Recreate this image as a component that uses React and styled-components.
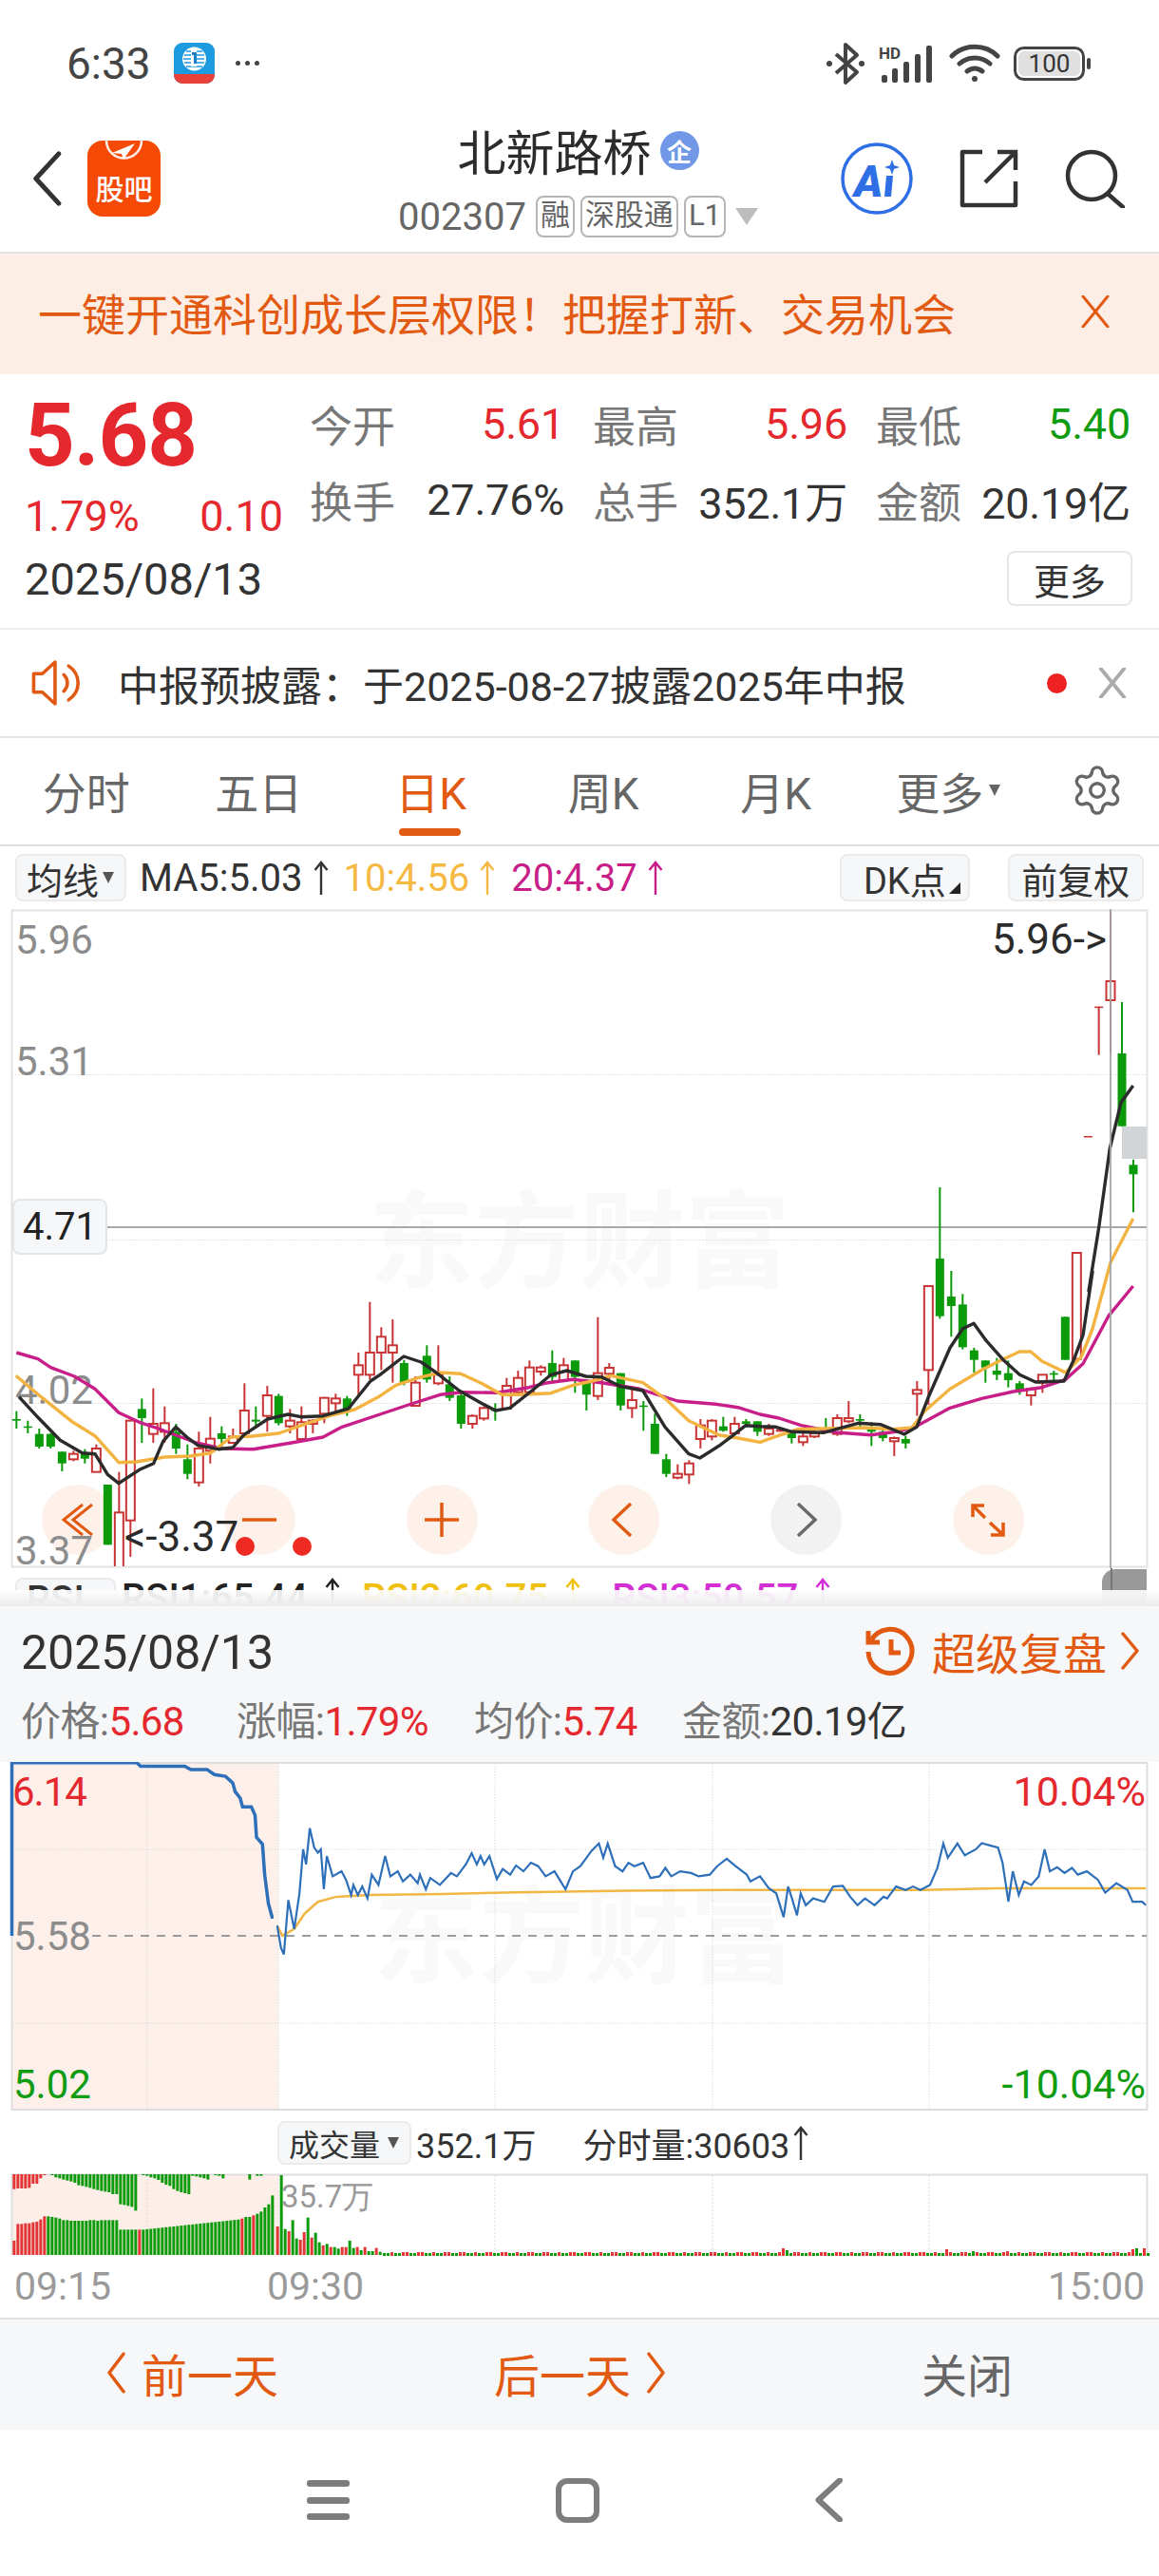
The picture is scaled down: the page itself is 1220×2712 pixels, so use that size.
import React from 'react';
import styled, { createGlobalStyle } from 'styled-components';
import { Settings } from 'lucide-react';

const RED = '#e4282d';
const GREEN = '#109c10';
const ORANGE = '#e25a12';
const CANDLE_RED = '#c93434';
const CANDLE_GREEN = '#0a9a0a';

// candles read off the chart: [x, wickTop, bodyTop, bodyBottom, wickBottom, colour]
const LEFT_CANDLES = [
  [52, 440, 465, 470, 495, 'g'], [88, 470, 488, 492, 510, 'g'], [124, 495, 512, 552, 558, 'g'],
  [160, 510, 512, 552, 558, 'g'], [196, 568, 568, 605, 630, 'g'], [232, 565, 575, 592, 598, 'r'],
  [268, 560, 575, 590, 605, 'g'], [304, 545, 558, 632, 632, 'r'], [340, 672, 672, 862, 862, 'g'],
  [376, 632, 760, 940, 940, 'r'], [412, 470, 470, 785, 900, 'r'], [448, 400, 433, 462, 540, 'g'],
  [484, 368, 480, 512, 540, 'r'], [520, 425, 478, 505, 540, 'r'], [556, 480, 505, 558, 575, 'g'],
  [592, 545, 592, 638, 655, 'g'], [628, 505, 558, 665, 678, 'r'], [664, 458, 527, 565, 605, 'r'],
  [700, 488, 510, 528, 555, 'g'], [736, 495, 520, 540, 540, 'r'], [772, 352, 438, 510, 510, 'r'],
  [808, 425, 467, 473, 490, 'g'], [844, 360, 390, 455, 505, 'r'], [880, 385, 392, 478, 485, 'g'],
  [916, 433, 470, 488, 510, 'r'], [952, 425, 475, 528, 528, 'r'], [988, 465, 470, 480, 510, 'r'],
  [1024, 395, 398, 448, 478, 'r'], [1060, 385, 400, 415, 445, 'r'], [1096, 392, 400, 440, 455, 'g'],
  [1132, 255, 295, 325, 395, 'r'], [1168, 95, 255, 325, 340, 'r'], [1204, 175, 205, 255, 310, 'r'],
];
const MID_CANDLES = [
  [40, 150, 232, 255, 350, 'r'], [76, 278, 288, 350, 358, 'g'], [112, 330, 350, 423, 425, 'r'],
  [148, 232, 265, 340, 350, 'g'], [184, 232, 325, 352, 358, 'r'], [220, 330, 355, 398, 408, 'g'],
  [256, 385, 390, 480, 495, 'g'], [292, 450, 455, 480, 495, 'r'], [328, 425, 430, 463, 470, 'r'],
  [364, 415, 435, 437, 470, 'g'], [400, 335, 360, 432, 432, 'r'], [436, 312, 335, 380, 385, 'r'],
  [472, 280, 302, 380, 385, 'r'], [508, 295, 302, 315, 328, 'r'], [544, 248, 288, 332, 345, 'g'],
  [580, 272, 295, 342, 345, 'r'], [616, 280, 280, 332, 382, 'g'], [652, 340, 350, 388, 438, 'g'],
  [688, 143, 320, 392, 405, 'r'], [724, 288, 303, 322, 350, 'r'], [760, 320, 320, 422, 438, 'g'],
  [796, 372, 405, 430, 462, 'r'], [832, 408, 422, 426, 502, 'g'], [868, 448, 480, 575, 575, 'g'],
  [904, 575, 592, 638, 648, 'g'], [940, 608, 638, 650, 655, 'r'], [976, 595, 605, 640, 670, 'r'],
  [1012, 465, 485, 528, 558, 'r'], [1048, 465, 470, 520, 532, 'r'], [1084, 458, 488, 502, 505, 'g'],
  [1120, 458, 480, 510, 515, 'r'], [1156, 465, 472, 480, 490, 'g'], [1192, 472, 472, 505, 518, 'g'],
];
const RIGHT_CANDLES = [
  [28, 480, 495, 512, 518, 'r'], [64, 490, 497, 505, 505, 'r'], [100, 500, 510, 525, 542, 'g'],
  [136, 510, 520, 538, 550, 'r'], [172, 500, 510, 520, 525, 'r'], [208, 462, 500, 505, 510, 'g'],
  [244, 450, 462, 512, 518, 'r'], [280, 408, 462, 472, 478, 'r'], [316, 450, 465, 470, 490, 'g'],
  [352, 475, 495, 505, 550, 'g'], [388, 500, 505, 525, 535, 'g'], [424, 520, 525, 535, 582, 'r'],
  [460, 518, 528, 542, 558, 'g'], [496, 345, 373, 385, 455, 'r'], [532, 45, 45, 310, 420, 'r'],
  [568, -267, -42, 140, 148, 'g'], [604, -3, 78, 108, 205, 'g'], [640, 70, 103, 238, 245, 'g'],
  [676, 240, 248, 278, 318, 'g'], [712, 280, 280, 302, 350, 'g'], [748, 272, 312, 325, 342, 'g'],
  [784, 280, 320, 342, 365, 'g'], [820, 345, 352, 375, 388, 'g'], [856, 365, 370, 390, 422, 'r'],
  [892, 325, 325, 350, 382, 'r'], [928, 312, 320, 325, 345, 'g'], [964, 142, 142, 278, 278, 'g'],
  [1000, -60, -60, 275, 275, 'r'],
];
const TOP_CANDLES = [
  [316, 711, 711, 714, 714, 'r'], [350, 302, 302, 304, 455, 'r'], [387, 0, 222, 282, 448, 'r'],
  [423, 288, 450, 680, 680, 'g'], [459, 785, 802, 832, 952, 'g'],
];
const place = (list, ox, oy) =>
  list.map(([x, a, b, c, d, k]) => [ox + x / 3, oy + a / 3, oy + b / 3, oy + c / 3, oy + d / 3, k]);
const CANDLES = [
  ...place(LEFT_CANDLES, 0, 1340),
  ...place(MID_CANDLES, 400, 1340),
  ...place(RIGHT_CANDLES, 800, 1340),
  ...place(TOP_CANDLES, 1040, 960),
];

const toPts = (list, ox, oy, sx = 3, sy = 3) =>
  list.map(([x, y]) => `${(ox + x / sx).toFixed(1)},${(oy + y / sy).toFixed(1)}`).join(' ');

const MA5 = [
  toPts([[60, 395], [120, 460], [190, 532], [260, 572], [300, 575], [340, 640], [375, 668], [440, 625], [485, 605], [515, 535], [555, 490], [590, 522], [625, 548], [690, 560], [735, 555], [770, 515], [845, 465], [910, 450], [950, 458], [1020, 455], [1100, 432], [1170, 345]], 0, 1340),
  toPts([[0, 325], [75, 267], [130, 285], [180, 320], [250, 375], [320, 415], [365, 438], [410, 430], [480, 375], [540, 325], [590, 312], [650, 330], [700, 332], [760, 362], [830, 375], [900, 490], [975, 575], [1010, 588], [1070, 550], [1110, 520], [1155, 485]], 400, 1340),
  toPts([[0, 488], [50, 490], [100, 505], [200, 508], [310, 478], [380, 482], [420, 498], [455, 513], [495, 490], [530, 400], [600, 240], [640, 180], [675, 163], [715, 218], [770, 280], [820, 325], [870, 348], [960, 345], [990, 280], [1020, 200], [1050, 0]], 800, 1340),
  toPts([[318, 1200], [350, 1000], [385, 750], [420, 605], [458, 552]], 1040, 960),
].join(' ');
const MA10 = [
  toPts([[50, 328], [130, 395], [230, 475], [300, 518], [375, 602], [430, 600], [520, 585], [600, 582], [665, 572], [730, 522], [790, 520], [880, 510], [960, 482], [1040, 455], [1120, 435]], 0, 1340),
  toPts([[0, 392], [50, 358], [120, 335], [190, 318], [255, 322], [320, 352], [385, 388], [440, 388], [540, 383], [610, 358], [670, 345], [730, 328], [830, 350], [900, 400], [975, 470], [1070, 515], [1130, 525]], 400, 1340),
  toPts([[0, 538], [50, 520], [120, 497], [200, 495], [330, 492], [420, 497], [480, 492], [520, 440], [600, 370], [700, 310], [760, 280], [820, 252], [855, 252], [890, 282], [965, 318], [1015, 268], [1050, 180]], 800, 1340),
  toPts([[387, 1110], [458, 972]], 1040, 960),
].join(' ');
const MA20 = [
  toPts([[52, 255], [120, 275], [160, 302], [235, 330], [300, 370], [375, 445], [440, 475], [500, 495], [620, 540], [700, 558], [800, 560], [920, 540], [1020, 522], [1080, 490]], 0, 1340),
  toPts([[0, 450], [90, 420], [190, 388], [260, 380], [370, 382], [470, 365], [530, 350], [610, 340], [700, 350], [820, 370], [940, 408], [1060, 418], [1130, 428]], 400, 1340),
  toPts([[0, 450], [60, 462], [130, 485], [240, 507], [350, 515], [440, 503], [490, 490], [600, 430], [700, 400], [800, 378], [890, 365], [965, 340], [1020, 290], [1100, 140], [1178, 45]], 800, 1340),
].join(' ');

const PRE_LINE = toPts([[16, 1005], [16, 495], [185, 495], [190, 505], [250, 505], [258, 515], [280, 515], [290, 530], [305, 535], [315, 555], [318, 580], [325, 600], [328, 625], [340, 625], [345, 650], [347, 715], [355, 735], [358, 825], [363, 910], [368, 950], [370, 950]], 0, 1680, 1.285, 2.8);
const DAY_LINE = toPts([[375, 975], [380, 1040], [384, 1060], [390, 900], [398, 985], [405, 880], [410, 750], [414, 795], [419, 688], [425, 745], [430, 760], [434, 750], [438, 868], [442, 770], [450, 830], [462, 815], [468, 840], [475, 885], [478, 855], [484, 885], [490, 860], [497, 895], [503, 825], [512, 855], [521, 770], [528, 830], [538, 815], [545, 845], [555, 825], [565, 850], [568, 825], [576, 868], [582, 835], [595, 855], [610, 820], [618, 830], [630, 795], [638, 762], [645, 795], [650, 770], [655, 795], [662, 770], [672, 838], [680, 808], [690, 825], [698, 798], [708, 815], [718, 790], [728, 800], [738, 830], [750, 815], [765, 868], [775, 815], [785, 800], [800, 755], [810, 733], [816, 775], [822, 733], [832, 800], [842, 815], [850, 790], [858, 800], [870, 790], [880, 835], [892, 830], [900, 805], [908, 830], [920, 815], [935, 820], [945, 830], [960, 825], [970, 800], [983, 778], [995, 800], [1010, 825], [1015, 845], [1028, 830], [1040, 865], [1050, 880], [1060, 950], [1066, 860], [1072, 900], [1078, 945], [1083, 880], [1090, 915], [1100, 895], [1115, 905], [1127, 860], [1140, 858], [1150, 890], [1160, 915], [1170, 895], [1183, 915], [1195, 890], [1200, 895], [1212, 860], [1225, 870], [1235, 860], [1245, 870], [1258, 855], [1268, 805], [1276, 733], [1282, 775], [1295, 733], [1305, 768], [1320, 750], [1328, 732], [1338, 738], [1350, 745], [1356, 790], [1364, 905], [1370, 815], [1378, 885], [1385, 845], [1395, 855], [1405, 830], [1413, 750], [1420, 815], [1430, 803], [1440, 820], [1450, 805], [1458, 825], [1470, 815], [1485, 840], [1495, 878], [1510, 850], [1525, 870], [1532, 905], [1545, 905], [1550, 915]], 0, 1680, 1.285, 2.8);
const AVG_LINE = toPts([[375, 975], [382, 1005], [398, 985], [412, 940], [430, 905], [455, 890], [500, 885], [600, 882], [700, 877], [850, 872], [1000, 870], [1250, 870], [1350, 865], [1550, 865]], 0, 1680, 1.285, 2.8);

// volume bars: y values in the 3x crop, one bar per 12 units
const buildVolume = () => {
  const bars = [];
  const bar = (X, top, bottom, k) => bars.push([X / 3, 2285 + top / 3, (bottom - top) / 3, k]);
  [225, 172, 172, 170, 170, 167, 165, 158, 148].forEach((y, i) => bar(40 + i * 12, y, 270, 'r'));
  [148, 150, 152, 155, 160, 160, 162, 162, 162, 162, 162, 160, 160, 162, 160, 160, 160, 160, 160].forEach((y, i) => bar(148 + i * 12, y, 270, 'g'));
  [190, 190, 190, 190, 190].forEach((y, i) => bar(376 + i * 12, y, 270, 'g'));
  bar(436, 190, 270, 'r');
  for (let X = 448; X < 760; X += 12) bar(X, 190 - ((X - 448) / 312) * 33, 270, 'g');
  [[760, 155, 'r'], [772, 150, 'g'], [784, 150, 'g'], [796, 145, 'r'], [808, 140, 'g'], [820, 133, 'g'], [832, 120, 'g'], [844, 110, 'g'], [856, 82, 'g']].forEach(([X, y, k]) => bar(X, y, 270, k));
  [62, 60, 60, 60, 58, 45, 45, 28, 18].forEach((y, i) => bar(40 + i * 12, 15, y, 'r'));
  [18, 25, 28, 32, 35, 38, 42, 50, 52, 55, 58, 62, 65, 68, 70, 72, 78, 78, 110, 112, 115, 118, 130].forEach((y, i) => bar(160 + i * 12, 15, y, 'g'));
  [18, 20, 25, 28, 33, 42, 48, 52, 62, 68, 72, 75, 78, 20, 22, 25, 28, 32].forEach((y, i) => bar(448 + i * 12, 15, y, 'g'));
  [[676, 18], [688, 20], [700, 28], [784, 32], [808, 20], [820, 20]].forEach(([X, y]) => bar(X, 15, y, 'g'));
  [[872, 180, 'r'], [884, 18, 'g'], [896, 188, 'g'], [908, 195, 'r'], [920, 160, 'g'], [932, 218, 'g'], [944, 222, 'r'], [956, 198, 'r'], [968, 152, 'g'], [980, 215, 'r'], [992, 200, 'g'], [1004, 230, 'g'], [1016, 240, 'r'], [1028, 235, 'g'], [1040, 245, 'r'], [1052, 245, 'g'], [1064, 250, 'g'], [1076, 245, 'r'], [1088, 245, 'r'], [1100, 225, 'g'], [1112, 248, 'g'], [1124, 245, 'r'], [1136, 255, 'g'], [1148, 245, 'r'], [1160, 258, 'g'], [1172, 258, 'g'], [1184, 248, 'r'], [1196, 260, 'g']].forEach(([X, y, k]) => bar(X, y, 270, k));
  const spikes = { 823: 8, 827: 6, 995: 7, 1023: 5, 1059: 5, 1191: 7, 1195: 8, 1203: 8 };
  for (let x = 403; x < 1208; x += 4) {
    const seed = (x * 37) % 11;
    const h = spikes[x] || 3 + (seed % 2);
    bars.push([x, 2376 - h, h, seed % 2 ? 'r' : 'g']);
  }
  return bars;
};
const VOLUME = buildVolume();

const GlobalStyle = createGlobalStyle`
  html, body { margin: 0; padding: 0; background: #fff; }
  * { box-sizing: border-box; }
  body { font-family: Roboto, "Noto Sans CJK SC", sans-serif; color: #333; }
`;

const Page = styled.div`
  width: 1220px;
  height: 2712px;
  overflow: hidden;
  background: #fff;
  display: flex;
  flex-direction: column;
`;

const StatusBar = styled.div`
  height: 105px;
  padding: 28px 71px 0 70px;
  display: flex;
  align-items: center;
  gap: 22px;
`;
const Clock = styled.span`
  font-size: 46px;
  color: #444;
  width: 91px;
`;
const Dots = styled.span`
  display: flex;
  gap: 5px;
  & > i {
    width: 5px;
    height: 5px;
    border-radius: 50%;
    background: #444;
  }
`;
const StatusIcons = styled.div`
  margin-left: auto;
  display: flex;
  align-items: center;
  gap: 14px;
`;

const Header = styled.header`
  height: 162px;
  padding: 6px 36px 0 33px;
  display: grid;
  grid-template-columns: 1fr auto 1fr;
  align-items: center;
  border-bottom: 2px solid #e2e2e2;
`;
const HeaderLeft = styled.div`
  display: flex;
  align-items: center;
  gap: 27px;
`;
const HeaderRight = styled.div`
  display: flex;
  align-items: center;
  justify-content: flex-end;
  gap: 49px;
`;
const TitleBlock = styled.div`
  display: flex;
  flex-direction: column;
  align-items: center;
  gap: 16px;
  margin-top: 2px;
`;
const TitleRow = styled.div`
  display: flex;
  align-items: center;
  gap: 9px;
  height: 62px;
`;
const Title = styled.h1`
  margin: 0;
  font-size: 51px;
  font-weight: 400;
  color: #2b2b2b;
`;
const QualBadge = styled.span`
  width: 41px;
  height: 41px;
  border-radius: 50%;
  background: #7098e6;
  color: #fff;
  font-size: 26px;
  font-weight: 700;
  display: flex;
  align-items: center;
  justify-content: center;
`;
const SubRow = styled.div`
  display: flex;
  align-items: center;
  gap: 6px;
  height: 46px;
  color: #666;
`;
const Code = styled.span`
  font-size: 40px;
  margin-right: 4px;
`;
const Tag = styled.span`
  height: 44px;
  padding: 0 3px;
  border: 2px solid #b5b5b5;
  border-radius: 8px;
  font-size: 31px;
  line-height: 38px;
  color: #666;
`;
const Caret = styled.i`
  margin-left: 4px;
  border-left: 12px solid transparent;
  border-right: 12px solid transparent;
  border-top: 18px solid #bdbdbd;
`;

const Banner = styled.div`
  height: 127px;
  padding: 0 50px 6px 40px;
  background: #fcede5;
  display: flex;
  align-items: center;
  justify-content: space-between;
  font-size: 46px;
  color: ${ORANGE};
`;

const Quote = styled.section`
  height: 269px;
  padding: 20px 28px 0 26px;
  border-bottom: 2px solid #ececec;
`;
const QuoteTop = styled.div`
  display: flex;
  height: 162px;
`;
const QuoteLeft = styled.div`
  width: 300px;
`;
const LastPrice = styled.div`
  font-size: 92px;
  line-height: 90px;
  font-weight: 700;
  color: ${RED};
  letter-spacing: -1px;
`;
const ChangeRow = styled.div`
  width: 272px;
  height: 72px;
  margin-top: 3px;
  display: flex;
  align-items: center;
  justify-content: space-between;
  font-size: 45px;
  color: ${RED};
`;
const Stats = styled.div`
  display: grid;
  grid-template-columns: repeat(3, 268px);
  column-gap: 30px;
  row-gap: 14px;
  grid-auto-rows: 66px;
  margin-top: -1px;
`;
const Stat = styled.div`
  display: flex;
  align-items: center;
  justify-content: space-between;
`;
const StatLabel = styled.span`
  font-size: 45px;
  color: #777;
`;
const StatValue = styled.span`
  font-size: 45px;
  letter-spacing: -0.2px;
  color: ${({ $tone }) => ($tone === 'up' ? RED : $tone === 'down' ? GREEN : '#333')};
`;
const DateRow = styled.div`
  height: 66px;
  display: flex;
  align-items: center;
  justify-content: space-between;
`;
const DateText = styled.span`
  font-size: ${({ $big }) => ($big ? 50 : 47)}px;
  color: #333;
`;
const MoreButton = styled.span`
  width: 132px;
  height: 58px;
  border: 2px solid #e6e6e6;
  border-radius: 8px;
  font-size: 38px;
  color: #333;
  display: flex;
  align-items: center;
  justify-content: center;
`;

const Notice = styled.div`
  height: 114px;
  padding: 0 33px;
  border-bottom: 2px solid #e4e4e4;
  display: flex;
  align-items: center;
  font-size: 43px;
  color: #333;
`;
const NoticeText = styled.span`
  margin-left: 35px;
`;
const RedDot = styled.i`
  margin-left: auto;
  width: 21px;
  height: 21px;
  border-radius: 50%;
  background: #ee2222;
  margin-right: 32px;
`;

const Tabs = styled.nav`
  height: 114px;
  border-bottom: 2px solid #dcdcdc;
  display: grid;
  grid-template-columns: repeat(6, 181.5px) 1fr;
`;
const Tab = styled.div`
  position: relative;
  padding-bottom: 2px;
  display: flex;
  align-items: center;
  justify-content: center;
  font-size: 46px;
  color: ${({ $active }) => ($active ? ORANGE : '#666')};
  ${({ $active }) =>
    $active &&
    `&::after {
      content: '';
      position: absolute;
      left: 57px;
      bottom: 9px;
      width: 65px;
      height: 8px;
      border-radius: 4px;
      background: ${ORANGE};
    }`}
`;
const SmallCaret = styled.i`
  margin-left: 6px;
  border-left: 6px solid transparent;
  border-right: 6px solid transparent;
  border-top: 12px solid #666;
`;

const MaRow = styled.div`
  height: 66px;
  padding: 0 16px;
  display: flex;
  align-items: center;
  font-size: 40px;
`;
const SelectBox = styled.span`
  position: relative;
  display: flex;
  align-items: center;
  justify-content: ${({ $center }) => ($center ? 'center' : 'flex-start')};
  gap: 4px;
  width: ${({ $w }) => $w}px;
  height: ${({ $h }) => $h || 50}px;
  padding-left: ${({ $center }) => ($center ? 0 : 10)}px;
  margin-left: ${({ $ml }) => $ml || 0}px;
  background: #f6f7f9;
  border: 2px solid #ebebeb;
  border-radius: 8px;
  font-size: ${({ $fs }) => $fs || 38}px;
  color: #333;
`;
const MaValue = styled.span`
  display: flex;
  align-items: center;
  margin-left: ${({ $ml }) => $ml}px;
  gap: 11px;
  color: ${({ $color }) => $color};
`;
const Corner = styled.i`
  position: absolute;
  right: 8px;
  bottom: 6px;
  border-left: 12px solid transparent;
  border-bottom: 12px solid #222;
`;

const ChartWrap = styled.div`
  position: relative;
  height: 694px;
  flex: none;
`;
const ChartSvg = styled.svg`
  position: relative;
  z-index: 1;
  display: block;
`;
const PlainSvg = styled.svg`
  display: block;
  flex: none;
`;
const ChartControls = styled.div`
  position: absolute;
  z-index: 0;
  left: 44px;
  top: 606px;
  display: flex;
  gap: 116.8px;
`;
const ControlButton = styled.span`
  width: 75px;
  height: 74px;
  border-radius: 50%;
  background: ${({ $muted }) => ($muted ? '#f2f2f2' : '#fdf1ea')};
  display: flex;
  align-items: center;
  justify-content: center;
`;
const PriceTag = styled.span`
  position: absolute;
  z-index: 2;
  left: 13px;
  top: 305px;
  width: 100px;
  height: 59px;
  border: 2px solid #e3e5e8;
  border-radius: 8px;
  background: #f6f7f9;
  font-size: 40px;
  color: #222;
  display: flex;
  align-items: center;
  justify-content: center;
`;
const ScrollBlock = styled.span`
  position: absolute;
  z-index: 2;
  right: 13px;
  top: 229px;
  width: 26px;
  height: 34px;
  background: #d2d5d8;
`;
const AxisText = styled.text`
  font-family: Roboto, sans-serif;
  font-size: ${({ $size }) => $size || 42}px;
  letter-spacing: ${({ $track }) => $track || 0}px;
  fill: ${({ $fill }) => $fill || '#8c8c8c'};
`;
const Watermark = styled.text`
  font-family: "Noto Sans CJK SC", sans-serif;
  font-size: 111px;
  font-weight: 700;
  fill: #f9f9f9;
`;

const RsiRow = styled.div`
  position: relative;
  height: 40px;
  flex: none;
  padding: 10px 0 0 16px;
  display: flex;
  font-size: 40px;
  overflow: hidden;
  line-height: 44px;
`;
const RsiBox = styled.span`
  width: 106px;
  height: 50px;
  background: #f6f7f9;
  border: 2px solid #ebebeb;
  border-radius: 8px;
  padding-left: 10px;
  font-weight: 500;
`;
const RsiValue = styled.span`
  display: flex;
  gap: 18px;
  margin-left: ${({ $ml }) => $ml}px;
  color: ${({ $color }) => $color};
  font-weight: 500;
  white-space: pre;
`;
const ScrollHandle = styled.span`
  position: absolute;
  right: 13px;
  top: 1px;
  width: 47px;
  height: 40px;
  border-radius: 14px 0 0 0;
  background: #999;
  &::after {
    content: '';
    position: absolute;
    left: 9px;
    top: -2px;
    width: 2px;
    height: 44px;
    background: #777;
  }
`;

const Sheet = styled.section`
  position: relative;
  z-index: 3;
  flex: none;
  height: 164px;
  padding: 0 20px 0 22px;
  background: #f6f7f9;
  &::before {
    content: '';
    position: absolute;
    left: 0;
    right: 0;
    top: -17px;
    height: 17px;
    background: linear-gradient(to bottom, rgba(255, 255, 255, 0.9), #ececec);
  }
`;
const SheetTop = styled.div`
  height: 98px;
  display: flex;
  align-items: center;
  justify-content: space-between;
`;
const ReplayLink = styled.span`
  display: flex;
  align-items: center;
  margin-top: -4px;
  font-size: 46px;
  color: ${ORANGE};
`;
const ReplayText = styled.span`
  margin: 0 15px 0 17px;
`;
const InfoRow = styled.div`
  height: 48px;
  display: grid;
  grid-template-columns: 227px 250px 219px auto;
  font-size: 42px;
  line-height: 48px;
  letter-spacing: -0.6px;
  color: #777;
`;
const InfoValue = styled.span`
  color: ${({ $dark }) => ($dark ? '#333' : RED)};
`;

const VolumeHead = styled.div`
  height: 58px;
  flex: none;
  display: flex;
  align-items: center;
  padding-left: 292px;
  font-size: 36px;
`;
const VolumeFigure = styled.span`
  margin-left: ${({ $ml }) => $ml}px;
  display: flex;
  align-items: center;
  gap: 4px;
  color: #333;
`;
const TimeAxis = styled.div`
  height: 63px;
  flex: none;
  padding: 0 15px 3px;
  display: flex;
  justify-content: space-between;
  align-items: center;
  font-size: 41px;
  color: #9a9a9a;
`;
const TimeMid = styled.span`
  position: relative;
  left: -278px;
`;

const Footer = styled.div`
  height: 118px;
  flex: none;
  padding: 0 0 5px 112px;
  border-top: 2px solid #e0e0e0;
  background: #f6f7f9;
  display: grid;
  grid-template-columns: 408px 450px auto;
  align-items: center;
  font-size: 48px;
`;
const FooterItem = styled.span`
  display: flex;
  align-items: center;
  gap: 17px;
  color: ${({ $muted }) => ($muted ? '#666' : ORANGE)};
`;

const NavBar = styled.div`
  flex: 1;
  padding: 0 0 6px 323px;
  display: flex;
  align-items: center;
`;
const NavMenu = styled.span`
  width: 45px;
  height: 42px;
  display: flex;
  flex-direction: column;
  justify-content: space-between;
  & > i {
    height: 7px;
    border-radius: 3px;
    background: #7d7d7d;
  }
`;
const NavHome = styled.span`
  width: 46px;
  height: 47px;
  margin-left: 217px;
  border: 6px solid #7d7d7d;
  border-radius: 12px;
`;
const NavBack = styled.span`
  margin-left: 226px;
  display: flex;
`;

const Chevron = ({ dir = 'left', w = 20, h = 40, color = '#333', sw = 4 }) => (
  <svg width={w} height={h} viewBox="0 0 20 40" preserveAspectRatio="none" fill="none">
    <path d={dir === 'left' ? 'M18 2 3 20l15 18' : 'M2 2l15 18L2 38'} stroke={color} strokeWidth={sw} strokeLinecap="round" strokeLinejoin="round" vectorEffect="non-scaling-stroke" />
  </svg>
);

const Cross = ({ size = 34, color = ORANGE, sw = 3 }) => (
  <svg width={size} height={size} viewBox="0 0 34 34" fill="none">
    <path d="M4 1l26 32M30 1 4 33" stroke={color} strokeWidth={sw} strokeLinecap="round" />
  </svg>
);

const UpArrow = ({ color, h = 36 }) => (
  <svg width="16" height={h} viewBox="0 0 16 36" fill="none">
    <path d="M8 36V2M1.5 10 8 2l6.5 8" stroke={color} strokeWidth="2.4" />
  </svg>
);

const AppBadge = () => (
  <svg width="43" height="43" viewBox="0 0 43 43">
    <rect width="43" height="43" rx="9" fill="#1d9be0" />
    <path d="M0 33h43v1a9 9 0 0 1-9 9H9a9 9 0 0 1-9-9z" fill="#e8403a" />
    <circle cx="21.5" cy="17" r="12.5" fill="#fff" />
    <path d="M13 9h17M11 13h21M10 17h22M11 21h21M13 25h17" stroke="#1d9be0" strokeWidth="1.6" />
    <path d="M18 8h6v17h-6z" fill="#fff" />
    <path d="M19 10h5v12h-3V13h-2z" fill="#1d7fc4" />
  </svg>
);

const BluetoothIcon = () => (
  <svg width="42" height="46" viewBox="0 0 42 46" fill="none">
    <path d="M11 13 33 32 21 43V3l12 11-22 19" stroke="#444" strokeWidth="4" strokeLinejoin="round" />
    <circle cx="4" cy="23" r="3" fill="#444" />
    <circle cx="38" cy="23" r="3" fill="#444" />
  </svg>
);

const SignalIcon = () => (
  <svg width="60" height="42" viewBox="0 0 60 42">
    <text x="0" y="16" fontFamily="Roboto, sans-serif" fontSize="17" fontWeight="700" fill="#444">HD</text>
    <g fill="#444">
      <rect x="3" y="33" width="6" height="8" rx="2" />
      <rect x="14" y="26" width="6" height="15" rx="2" />
      <rect x="26" y="19" width="6" height="22" rx="2" />
      <rect x="38" y="11" width="6" height="30" rx="2" />
      <rect x="50" y="2" width="6" height="39" rx="2" />
    </g>
  </svg>
);

const WifiIcon = () => (
  <svg width="54" height="42" viewBox="0 0 54 42" fill="none" stroke="#444" strokeWidth="5" strokeLinecap="round">
    <path d="M3 13C16 0 38 0 51 13" />
    <path d="M11 21c9-8 23-8 32 0" />
    <path d="M19 29c5-4 11-4 16 0" />
    <circle cx="27" cy="37" r="3" fill="#444" stroke="none" />
  </svg>
);

const BatteryIcon = () => (
  <svg width="82" height="36" viewBox="0 0 82 36" fill="none">
    <rect x="1.5" y="1.5" width="72" height="33" rx="9" stroke="#444" strokeWidth="3" />
    <rect x="5" y="5" width="65" height="26" rx="6" fill="#e0e0e0" />
    <rect x="77" y="12" width="4" height="12" rx="2" fill="#444" />
    <text x="37.5" y="27" textAnchor="middle" fontFamily="Roboto, sans-serif" fontSize="26" fill="#333">100</text>
  </svg>
);

const GubaLogo = () => (
  <svg width="77" height="80" viewBox="0 0 77 80">
    <rect width="77" height="80" rx="16" fill="#f54a05" />
    <path d="M20 0a18.500 18.500 0 0 0 37 0" fill="none" stroke="#fff" strokeWidth="2.500" opacity="0.9" />
    <path d="M26 13 50 3 38 20l-2-6z" fill="#fff" />
    <text x="38.500" y="62" textAnchor="middle" fontFamily='"Noto Sans CJK SC", sans-serif' fontSize="30" fontWeight="500" fill="#fff">股吧</text>
  </svg>
);

const AiIcon = () => (
  <svg width="76" height="78" viewBox="0 0 76 78" fill="none">
    <circle cx="38" cy="39" r="36" stroke="#2e6fe6" strokeWidth="3.500" />
    <text x="14" y="58" fontFamily="Roboto, sans-serif" fontSize="46" fontWeight="900" fontStyle="italic" fill="#2e6fe6">A</text>
    <path d="M48 36h7l-2 22h-7z" fill="#2e6fe6" />
    <path d="M54 19l2 6 6 2-6 2-2 6-2-6-6-2 6-2z" fill="#2e6fe6" />
  </svg>
);

const ShareIcon = () => (
  <svg width="62" height="62" viewBox="0 0 62 62" fill="none" stroke="#333" strokeWidth="4.500">
    <path d="M24 3H3v56h56V34" strokeLinejoin="round" />
    <path d="M27 35 59 3M40 3h19v19" />
  </svg>
);

const SearchIcon = () => (
  <svg width="63" height="62" viewBox="0 0 63 62" fill="none" stroke="#333" strokeWidth="4.500">
    <ellipse cx="28" cy="28" rx="25" ry="25" />
    <path d="M45 47 61 61" strokeLinecap="round" />
  </svg>
);

const SpeakerIcon = () => (
  <svg width="56" height="48" viewBox="0 0 54 47" fill="none" stroke={ORANGE} strokeWidth="3.500" strokeLinejoin="round">
    <path d="M2 14h9L24 2v43L11 33H2z" />
    <path d="M33 15c5 5 5 12 0 17" strokeLinecap="round" />
    <path d="M38 6c13 9 13 26 0 35" strokeLinecap="round" />
  </svg>
);

const ReplayIcon = () => (
  <svg width="53" height="53" viewBox="0 0 53 53" fill="none" stroke={ORANGE} strokeWidth="5">
    <path d="M6 15a23 23 0 1 1-3 12" />
    <path d="M3 5v12h12" />
    <path d="M27 14v14h10" />
  </svg>
);

const ICONS = {
  back2: <path d="M24 2 4 18l20 16M34 2 14 18l20 16" stroke={ORANGE} strokeWidth="3" fill="none" />,
  minus: <path d="M1 18h36" stroke={ORANGE} strokeWidth="3.500" />,
  plus: <path d="M1 18h36M19 0v36" stroke={ORANGE} strokeWidth="3.500" />,
  left: <path d="M26 1 8 18l18 17" stroke={ORANGE} strokeWidth="3.500" fill="none" />,
  right: <path d="M10 1l18 17-18 17" stroke="#6a6a6a" strokeWidth="3.500" fill="none" />,
  expand: (
    <g stroke={ORANGE} strokeWidth="3.500" fill="none">
      <path d="M3 15V3h12M3 3l13 13M35 21v13H22M35 34 21 21" />
    </g>
  ),
};

const ChartControlsRow = () => (
  <ChartControls>
    {['back2', 'minus', 'plus', 'left', 'right', 'expand'].map((name) => (
      <ControlButton key={name} $muted={name === 'right'}>
        <svg width="38" height="36" viewBox="0 0 38 36">{ICONS[name]}</svg>
      </ControlButton>
    ))}
  </ChartControls>
);

const Candle = ({ d: [x, wt, bt, bb, wb, k] }) => {
  const color = k === 'r' ? CANDLE_RED : CANDLE_GREEN;
  const hollow = k === 'r' && bb - bt > 3;
  return (
    <g>
      <line x1={x} x2={x} y1={wt} y2={wb} stroke={color} strokeWidth="2" />
      <rect
        x={x - 4.5}
        y={bt}
        width={9}
        height={Math.max(bb - bt, 1.5)}
        fill={hollow ? '#fff' : color}
        stroke={hollow ? color : 'none'}
        strokeWidth="2"
      />
    </g>
  );
};

const KChart = () => (
  <ChartSvg width="1220" height="694" viewBox="0 958 1220 694">
    <defs>
      <clipPath id="kclip">
        <rect x="12" y="959" width="1195" height="691" />
      </clipPath>
    </defs>
    <Watermark x="388" y="1348">东方财富</Watermark>
    <g stroke="#dedede" strokeWidth="1" strokeDasharray="1.500 1.500">
      <line x1="13" x2="1207" y1="1132.500" y2="1132.500" />
      <line x1="13" x2="1207" y1="1306.500" y2="1306.500" />
      <line x1="13" x2="1207" y1="1478.500" y2="1478.500" />
    </g>
    <path d="M12.500 959.500H1207.500V1650.500H12.500Z" fill="none" stroke="#e3e3e3" strokeWidth="2" />
    <line x1="113" x2="1207" y1="1293" y2="1293" stroke="#a8a8a8" strokeWidth="2" />
    <AxisText x="16" y="1005">5.96</AxisText>
    <AxisText x="16" y="1133">5.31</AxisText>
    <AxisText x="16" y="1479">4.02</AxisText>
    <g clipPath="url(#kclip)">
      {CANDLES.map((c, i) => <Candle key={i} d={c} />)}
      <polyline points={MA20} fill="none" stroke="#c81e88" strokeWidth="3.400" strokeLinejoin="round" />
      <polyline points={MA10} fill="none" stroke="#f2b340" strokeWidth="3.400" strokeLinejoin="round" />
      <polyline points={MA5} fill="none" stroke="#2b2b2b" strokeWidth="3.400" strokeLinejoin="round" />
    </g>
    <line x1="1169" x2="1169" y1="958" y2="1652" stroke="#a5a5a5" strokeWidth="2" opacity="0.9" />
    <AxisText x="16" y="1648">3.37</AxisText>
    <AxisText x="131" y="1634" $size={44} $fill="#2b2b2b">{'<-3.37'}</AxisText>
    <AxisText x="1044" y="1005" $size={44} $fill="#2b2b2b">{'5.96->'}</AxisText>
    <circle cx="258" cy="1629" r="10" fill="#ee2a22" />
    <circle cx="318" cy="1629" r="10" fill="#ee2a22" />
  </ChartSvg>
);

const IntradayChart = () => (
  <PlainSvg width="1220" height="372" viewBox="0 1856 1220 372">
    <rect x="12" y="1856" width="281" height="366" fill="#fdefe9" />
    <Watermark x="393" y="2080">东方财富</Watermark>
    <g stroke="#dddddd" strokeWidth="1" strokeDasharray="1.500 1.500">
      <line x1="13" x2="1207" y1="1948" y2="1948" />
      <line x1="13" x2="1207" y1="2131" y2="2131" />
      <line x1="155" x2="155" y1="1857" y2="2222" />
      <line x1="293" x2="293" y1="1857" y2="2222" />
      <line x1="521" x2="521" y1="1857" y2="2222" />
      <line x1="750" x2="750" y1="1857" y2="2222" />
      <line x1="978" x2="978" y1="1857" y2="2222" />
    </g>
    <path d="M12.500 1857H1207.500V2222H12.500Z" fill="none" stroke="#dedede" strokeWidth="2" />
    <line x1="97" x2="1207" y1="2039" y2="2039" stroke="#9c9c9c" strokeWidth="2" strokeDasharray="9 8" />
    <polyline points={AVG_LINE} fill="none" stroke="#f0b745" strokeWidth="2.500" />
    <polyline points={PRE_LINE} fill="none" stroke="#2e6fb9" strokeWidth="3.500" />
    <polyline points={DAY_LINE} fill="none" stroke="#2e6fb9" strokeWidth="2.200" />
    <AxisText x="13" y="1902" $fill={RED} $track={-1}>6.14</AxisText>
    <AxisText x="14" y="2054">5.58</AxisText>
    <AxisText x="14" y="2210" $fill={GREEN}>5.02</AxisText>
    <AxisText x="1206" y="1902" textAnchor="end" $size={43} $fill={RED}>10.04%</AxisText>
    <AxisText x="1206" y="2210" textAnchor="end" $size={43} $fill={GREEN}>-10.04%</AxisText>
  </PlainSvg>
);

const VolumeChart = () => (
  <PlainSvg width="1220" height="92" viewBox="0 2286 1220 92">
    <rect x="12" y="2290" width="281" height="85" fill="#fdeee8" />
    <g stroke="#dddddd" strokeWidth="1" strokeDasharray="2 2">
      <line x1="155" x2="155" y1="2291" y2="2375" />
      <line x1="293" x2="293" y1="2291" y2="2375" />
      <line x1="521" x2="521" y1="2291" y2="2375" />
      <line x1="750" x2="750" y1="2291" y2="2375" />
      <line x1="978" x2="978" y1="2291" y2="2375" />
    </g>
    <path d="M12.500 2375V2290.500H1207.500V2375" fill="none" stroke="#dedede" strokeWidth="2" />
    {VOLUME.map(([x, y, h, k], i) => (
      <rect key={i} x={x} y={y} width="3" height={h} fill={k === 'r' ? '#e23636' : CANDLE_GREEN} />
    ))}
    <AxisText x="296" y="2325" $size={33} $fill="#999">35.7万</AxisText>
  </PlainSvg>
);

const STATS = [
  ['今开', '5.61', 'up'], ['最高', '5.96', 'up'], ['最低', '5.40', 'down'],
  ['换手', '27.76%'], ['总手', '352.1万'], ['金额', '20.19亿'],
];
const TABS = ['分时', '五日', '日K', '周K', '月K'];

export default function App() {
  return (
    <Page>
      <GlobalStyle />
      <StatusBar>
        <Clock>6:33</Clock>
        <AppBadge />
        <Dots><i /><i /><i /></Dots>
        <StatusIcons>
          <BluetoothIcon />
          <SignalIcon />
          <WifiIcon />
          <BatteryIcon />
        </StatusIcons>
      </StatusBar>

      <Header>
        <HeaderLeft>
          <Chevron w={32} h={58} color="#333" sw={5} />
          <GubaLogo />
        </HeaderLeft>
        <TitleBlock>
          <TitleRow>
            <Title>北新路桥</Title>
            <QualBadge>企</QualBadge>
          </TitleRow>
          <SubRow>
            <Code>002307</Code>
            <Tag>融</Tag>
            <Tag>深股通</Tag>
            <Tag>L1</Tag>
            <Caret />
          </SubRow>
        </TitleBlock>
        <HeaderRight>
          <AiIcon />
          <ShareIcon />
          <SearchIcon />
        </HeaderRight>
      </Header>

      <Banner>
        <span>一键开通科创成长层权限！把握打新、交易机会</span>
        <Cross />
      </Banner>

      <Quote>
        <QuoteTop>
          <QuoteLeft>
            <LastPrice>5.68</LastPrice>
            <ChangeRow>
              <span>1.79%</span>
              <span>0.10</span>
            </ChangeRow>
          </QuoteLeft>
          <Stats>
            {STATS.map(([label, value, tone]) => (
              <Stat key={label}>
                <StatLabel>{label}</StatLabel>
                <StatValue $tone={tone}>{value}</StatValue>
              </Stat>
            ))}
          </Stats>
        </QuoteTop>
        <DateRow>
          <DateText>2025/08/13</DateText>
          <MoreButton>更多</MoreButton>
        </DateRow>
      </Quote>

      <Notice>
        <SpeakerIcon />
        <NoticeText>中报预披露：于2025-08-27披露2025年中报</NoticeText>
        <RedDot />
        <Cross size={32} color="#aaa" sw={4} />
      </Notice>

      <Tabs>
        {TABS.map((t) => (
          <Tab key={t} $active={t === '日K'}>{t}</Tab>
        ))}
        <Tab>更多<SmallCaret /></Tab>
        <Tab><Settings size={58} strokeWidth={1.4} color="#666" /></Tab>
      </Tabs>

      <MaRow>
        <SelectBox $w={117}>均线<SmallCaret style={{ marginLeft: 0, borderTopColor: '#555' }} /></SelectBox>
        <MaValue $ml={14} $color="#333">MA5:5.03<UpArrow color="#333" /></MaValue>
        <MaValue $ml={16} $color="#f5b942">10:4.56<UpArrow color="#f5b942" /></MaValue>
        <MaValue $ml={17} $color="#c81e88">20:4.37<UpArrow color="#c81e88" /></MaValue>
        <SelectBox $w={137} $ml={186} $center>DK点<Corner /></SelectBox>
        <SelectBox $w={143} $ml={40} $center>前复权</SelectBox>
      </MaRow>

      <ChartWrap>
        <ChartControlsRow />
        <KChart />
        <PriceTag>4.71</PriceTag>
        <ScrollBlock />
      </ChartWrap>

      <RsiRow>
        <RsiBox>RSI</RsiBox>
        <RsiValue $ml={6} $color="#222">RSI1:65.44<UpArrow color="#222" /></RsiValue>
        <RsiValue $ml={23} $color="#f0c010">RSI2:60.75<UpArrow color="#f0c010" /></RsiValue>
        <RsiValue $ml={33} $color="#d42fd4">RSI3:50.57<UpArrow color="#d42fd4" /></RsiValue>
        <ScrollHandle />
      </RsiRow>

      <Sheet>
        <SheetTop>
          <DateText $big>2025/08/13</DateText>
          <ReplayLink>
            <ReplayIcon />
            <ReplayText>超级复盘</ReplayText>
            <Chevron dir="right" w={20} h={40} color={ORANGE} sw={3.5} />
          </ReplayLink>
        </SheetTop>
        <InfoRow>
          <span>价格:<InfoValue>5.68</InfoValue></span>
          <span>涨幅:<InfoValue>1.79%</InfoValue></span>
          <span>均价:<InfoValue>5.74</InfoValue></span>
          <span>金额:<InfoValue $dark>20.19亿</InfoValue></span>
        </InfoRow>
      </Sheet>

      <IntradayChart />

      <VolumeHead>
        <SelectBox $w={141} $h={46} $fs={32}>成交量<SmallCaret style={{ marginLeft: 4, borderTopColor: '#555' }} /></SelectBox>
        <VolumeFigure $ml={5}>352.1万</VolumeFigure>
        <VolumeFigure $ml={49}>分时量:30603<UpArrow color="#333" /></VolumeFigure>
      </VolumeHead>

      <VolumeChart />

      <TimeAxis>
        <span>09:15</span>
        <TimeMid>09:30</TimeMid>
        <span>15:00</span>
      </TimeAxis>

      <Footer>
        <FooterItem><Chevron w={20} h={44} color={ORANGE} sw={3.5} />前一天</FooterItem>
        <FooterItem>后一天<Chevron dir="right" w={20} h={44} color={ORANGE} sw={3.5} /></FooterItem>
        <FooterItem $muted>关闭</FooterItem>
      </Footer>

      <NavBar>
        <NavMenu><i /><i /><i /></NavMenu>
        <NavHome />
        <NavBack><Chevron w={30} h={46} color="#7d7d7d" sw={6} /></NavBack>
      </NavBar>
    </Page>
  );
}
